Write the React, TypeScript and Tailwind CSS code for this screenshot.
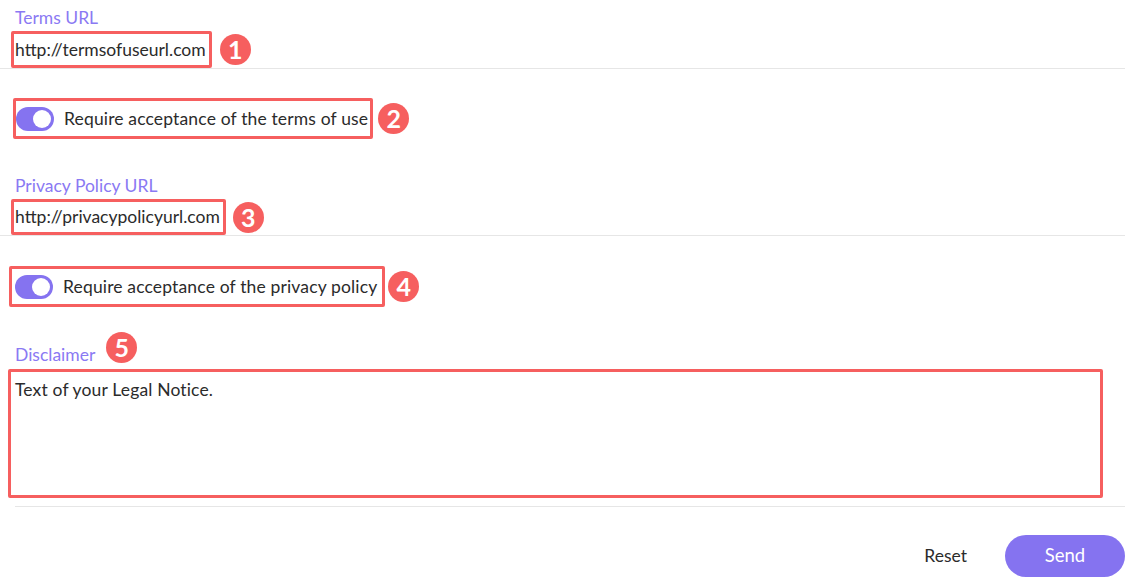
import React from 'react';

const font = { fontFamily: 'Lato, "Open Sans", sans-serif' };

const Badge = ({ n }: { n: number }) => (
  <span className="flex h-[31px] w-[31px] shrink-0 items-center justify-center rounded-full bg-[#f65f5f] text-[25px] font-bold leading-none text-white">
    {n}
  </span>
);

const Toggle = () => (
  <span className="flex h-[24px] w-[38px] shrink-0 items-center justify-end rounded-full bg-[#8573f0] pr-[3px]">
    <span className="h-[18px] w-[18px] rounded-full bg-white" />
  </span>
);

const UrlField = ({ label, value, n, gap, lh }: { label: string; value: string; n: number; gap: string; lh: string }) => (
  <div className="flex flex-col">
    <label className="pl-[15px] text-[17.5px] leading-[22px] text-[#8a79f3]">{label}</label>
    <div className={`mt-[2px] flex items-center border-b border-[#e6e6e6] pl-[11px] ${gap}`}>
      <div className={`rounded-[2px] border-[3px] border-[#f65f5f] pl-[1px] pr-[3px] py-[3px] text-[17.5px] text-[#2b2b2b] ${lh}`}>
        {value}
      </div>
      <Badge n={n} />
    </div>
  </div>
);

const ToggleRow = ({ text, n, pl, box, gap }: { text: string; n: number; pl: string; box: string; gap: string }) => (
  <div className={`flex items-center ${pl} ${gap}`}>
    <div className={`flex items-center gap-[10px] rounded-[2px] border-[3px] border-[#f65f5f] py-[5px] ${box}`}>
      <Toggle />
      <span className="text-[17.5px] leading-[25px] tracking-[0.15px] text-[#2b2b2b]">{text}</span>
    </div>
    <Badge n={n} />
  </div>
);

export default function App() {
  return (
    <div className="flex h-[582px] w-[1139px] flex-col bg-white pr-[14px] pt-[7px]" style={font}>
      <UrlField label="Terms URL" value="http://termsofuseurl.com" n={1} gap="gap-[8px]" lh="leading-[25px]" />
      <div className="mt-[29px]">
        <ToggleRow
          text="Require acceptance of the terms of use"
          n={2}
          pl="pl-[13px]"
          box="pl-0 pr-[2px]"
          gap="gap-[5px]"
        />
      </div>
      <div className="mt-[36px]">
        <UrlField label="Privacy Policy URL" value="http://privacypolicyurl.com" n={3} gap="gap-[7px]" lh="leading-[24px]" />
      </div>
      <div className="mt-[30px]">
        <ToggleRow
          text="Require acceptance of the privacy policy"
          n={4}
          pl="pl-[9px]"
          box="pl-[3px] pr-[5px]"
          gap="gap-[3px]"
        />
      </div>
      <div className="mt-[37px] mb-[3px] flex items-center gap-[11px] pl-[15px]">
        <label className="text-[17.5px] leading-[22px] text-[#8a79f3]">Disclaimer</label>
        <span className="-mt-[16px]">
          <Badge n={5} />
        </span>
      </div>
      <div className="ml-[15px] border-b border-[#e6e6e6] pb-[8px]">
        <div className="-ml-[7px] mr-[22px] h-[129px] rounded-[2px] border-[3px] border-[#f65f5f] px-[4px] py-[6px] text-[17.5px] leading-[24px] tracking-[0.15px] text-[#2b2b2b]">
          Text of your Legal Notice.
        </div>
      </div>
      <div className="mt-[28px] flex items-center justify-end gap-[38px]">
        <button className="text-[17.5px] text-[#2b2b2b]">Reset</button>
        <button className="h-[42px] w-[120px] rounded-full bg-[#8573f0] text-[18.5px] text-white">Send</button>
      </div>
    </div>
  );
}
